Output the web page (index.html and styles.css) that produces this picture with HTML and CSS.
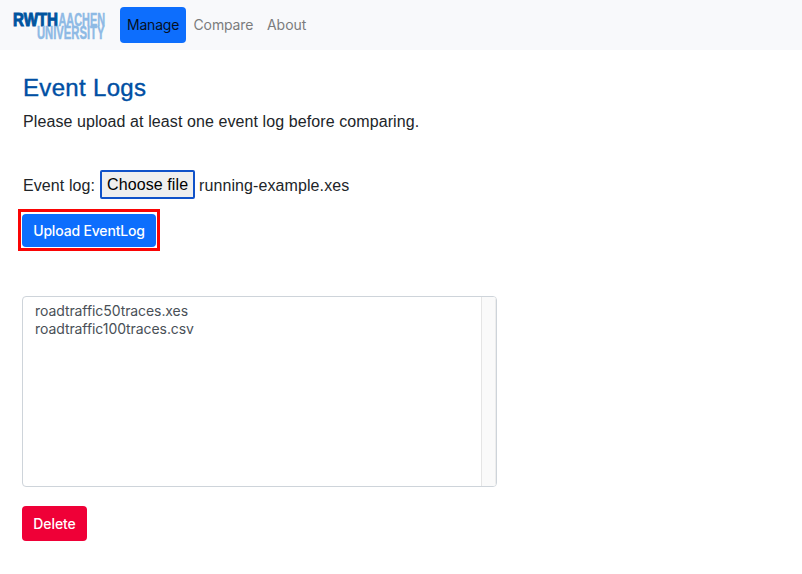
FILE: index.html
```html
<!DOCTYPE html>
<html lang="en">
<head>
<meta charset="utf-8">
<title>Event Logs</title>
<link rel="stylesheet" href="styles.css">
</head>
<body>
<nav class="navbar">
  <a class="brand" aria-label="RWTH Aachen University">
    <svg width="100" height="50" viewBox="0 0 100 50">
      <text class="logo-dark" x="0" y="25.5" textLength="45" lengthAdjust="spacingAndGlyphs">RWTH</text>
      <text class="logo-light" x="45.5" y="25.5" textLength="46.5" lengthAdjust="spacingAndGlyphs">AACHEN</text>
      <text class="logo-light" x="24" y="39" textLength="67.5" lengthAdjust="spacingAndGlyphs">UNIVERSITY</text>
    </svg>
  </a>
  <a class="nav-link active">Manage</a>
  <a class="nav-link compare">Compare</a>
  <a class="nav-link">About</a>
</nav>
<main class="content">
  <h1 class="title">Event Logs</h1>
  <p class="intro">Please upload at least one event log before comparing.</p>
  <div class="file-row">
    <span>Event log:</span>
    <button class="choose">Choose file</button>
    <span class="file-name">running-example.xes</span>
  </div>
  <div class="highlight"><button class="btn upload">Upload EventLog</button></div>
  <div class="log-list">
    <ul class="logs">
      <li>roadtraffic50traces.xes</li>
      <li>roadtraffic100traces.csv</li>
    </ul>
    <div class="track"></div>
  </div>
  <button class="btn delete">Delete</button>
</main>
</body>
</html>
```
FILE: styles.css
```css
* { box-sizing: border-box; }
body {
  margin: 0;
  background: #fff;
  color: #212529;
  font: 16px/24px "Liberation Sans", Arial, sans-serif;
  letter-spacing: .09px;
}
.navbar {
  display: flex;
  align-items: center;
  height: 50px;
  padding-left: 13px;
  background: #f8f9fb;
  font-family: Inter, sans-serif;
  font-size: 14px;
  letter-spacing: -.04px;
}
.brand { width: 107px; height: 50px; }
.brand svg { display: block; }
.logo-dark, .logo-light {
  font-family: "Liberation Sans", Arial, sans-serif;
  font-weight: 700;
  font-size: 17.5px;
  letter-spacing: 0;
}
.logo-dark { fill: #00549f; stroke: #00549f; stroke-width: 1px; }
.logo-light { fill: #8ebae5; stroke: #8ebae5; stroke-width: .5px; }
.nav-link {
  display: flex;
  align-items: center;
  height: 36px;
  padding: 0 7px;
  border-radius: 4px;
  color: #7b7c7d;
}
.nav-link.active { width: 66px; background: #0d6efd; color: #07101f; letter-spacing: -.2px; }
.nav-link.compare { width: 74px; padding-left: 7.5px; letter-spacing: -.12px; }
.content {
  display: flex;
  flex-direction: column;
  align-items: flex-start;
  padding: 23px 0 0 22px;
}
.title {
  margin: 0 0 7px 1px;
  color: #004fa3;
  font: 500 24px/30px "Liberation Sans", Arial, sans-serif;
  letter-spacing: .33px;
  -webkit-text-stroke: .4px #004fa3;
}
.intro { margin: 0 0 0 1px; }
.file-row {
  display: flex;
  align-items: center;
  height: 30px;
  margin: 35px 0 0 1px;
}
.file-row span { padding-top: 4px; }
.choose {
  width: 95px;
  height: 29px;
  margin: 0 4px 0 5px;
  padding: 2px 0 0;
  border: 2px solid #1052c9;
  border-radius: 2px;
  background: #efefef;
  color: #000;
  font: 16px "Liberation Sans", Arial, sans-serif;
  letter-spacing: .1px;
}
.highlight {
  width: 142px;
  height: 42px;
  margin: 10px 0 0 -4px;
  padding: 2px 1px 0;
  border: 3px solid #fa0505;
}
.btn {
  display: block;
  padding: 0;
  border: 0;
  border-radius: 4px;
  color: #fff;
  font: 500 14px Inter, sans-serif;
  letter-spacing: -.1px;
}
.upload { width: 134px; height: 33px; background: #0d6efd; letter-spacing: -.17px; }
.log-list {
  display: flex;
  justify-content: space-between;
  width: 475px;
  height: 191px;
  margin-top: 45px;
  border: 1px solid #ced4da;
  border-radius: 4px;
  overflow: hidden;
}
.logs {
  margin: 0;
  padding: 5px 0 0 12px;
  list-style: none;
  color: #495057;
  font: 14px/18px Inter, sans-serif;
  letter-spacing: -.08px;
}
.track {
  width: 15px;
  border-left: 1px solid #e5e5e5;
  border-right: 1px solid #ededed;
  background: #fafafa;
}
.delete { width: 65px; height: 35px; margin-top: 19px; background: #ef0037; }
```
